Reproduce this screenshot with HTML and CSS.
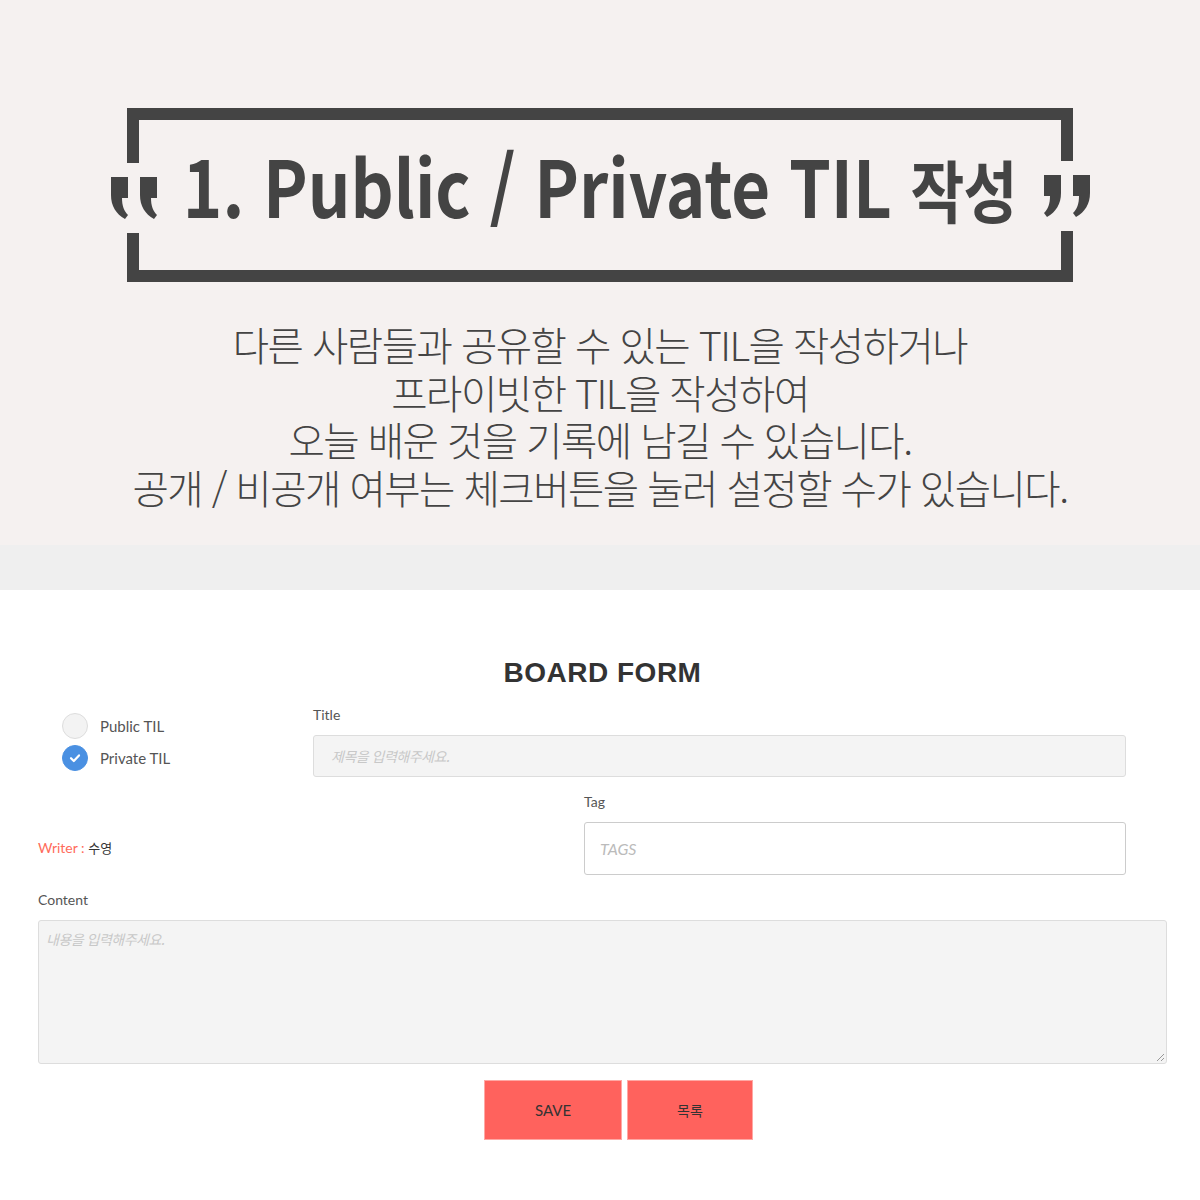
FILE: index.html
```html
<!DOCTYPE html>
<html lang="ko">
<head>
<meta charset="utf-8">
<title>Public / Private TIL</title>
<link rel="stylesheet" href="styles.css">
</head>
<body>
<section class="hero">
  <div class="frame">
    <span class="quote quote-left">
      <svg width="47" height="42" viewBox="0 0 47 42"><path d="M0 0H17V21H11C11 29 13 34 17 38L14 42C5 37 0 29 0 18Z" fill="#444"/><path d="M0 0H17V21H11C11 29 13 34 17 38L14 42C5 37 0 29 0 18Z" fill="#444" transform="translate(29 0)"/></svg>
    </span>
    <h1 class="title">1. Public / Private TIL <span class="title-ko">작성</span></h1>
    <span class="quote quote-right">
      <svg width="47" height="42" viewBox="0 0 47 42"><g transform="translate(47 0) scale(-1 1)"><path d="M0 0H17V21H11C11 29 13 34 17 38L14 42C5 37 0 29 0 18Z" fill="#444"/><path d="M0 0H17V21H11C11 29 13 34 17 38L14 42C5 37 0 29 0 18Z" fill="#444" transform="translate(29 0)"/></g></svg>
    </span>
  </div>
  <p class="desc">다른 사람들과 공유할 수 있는 TIL을 작성하거나<br>프라이빗한 TIL을 작성하여<br>오늘 배운 것을 기록에 남길 수 있습니다.<br>공개 / 비공개 여부는 체크버튼을 눌러 설정할 수가 있습니다.</p>
</section>
<div class="band"></div>
<section class="form">
  <h2 class="form-title">BOARD FORM</h2>
  <div class="row row-top">
    <div class="radios">
      <label class="radio"><span class="dot"></span>Public TIL</label>
      <label class="radio"><span class="dot dot-on"><svg width="14" height="14" viewBox="0 0 14 14"><path d="M3 7.2L5.8 10L11 4.4" fill="none" stroke="#fff" stroke-width="2.2" stroke-linecap="round" stroke-linejoin="round"/></svg></span>Private TIL</label>
    </div>
    <div class="field field-title">
      <div class="label">Title</div>
      <div class="input input-gray">제목을 입력해주세요.</div>
    </div>
  </div>
  <div class="row row-mid">
    <div class="writer"><span class="writer-key">Writer : </span><span class="writer-val">수영</span></div>
    <div class="field field-tag">
      <div class="label">Tag</div>
      <div class="input input-white">TAGS</div>
    </div>
  </div>
  <div class="content">
    <div class="label">Content</div>
    <div class="textarea">내용을 입력해주세요.<svg class="grip" width="9" height="9" viewBox="0 0 9 9"><path d="M8 1L1 8M8 5L5 8" stroke="#999" stroke-width="1"/></svg></div>
  </div>
  <div class="buttons">
    <button class="btn btn-save">SAVE</button>
    <button class="btn btn-list">목록</button>
  </div>
</section>
</body>
</html>
```
FILE: styles.css
```css
* { box-sizing: border-box; }
body {
  margin: 0;
  background: #fff;
  font-family: "Noto Sans", "Noto Sans CJK KR", sans-serif;
}
.hero {
  background: #f5f1f0;
  height: 545px;
  padding-top: 108px;
}
.frame {
  position: relative;
  margin-left: 127px;
  width: 946px;
  height: 174px;
  border: 12px solid #444;
  display: flex;
  align-items: center;
  justify-content: center;
}
.quote {
  position: absolute;
  z-index: 1;
  width: 47px;
  height: 70px;
  background: #f5f1f0;
  display: flex;
  align-items: center;
  justify-content: center;
}
.quote-left { left: -28px; top: 43px; }
.quote-right { left: 904px; top: 41px; }
.title {
  flex: none;
  margin: 0 0 22px 0;
  white-space: nowrap;
  font-family: "Noto Sans CJK KR", sans-serif;
  font-weight: bold;
  font-size: 78px;
  line-height: 1;
  color: #444;
  transform: scaleX(0.86);
}
.title-ko {
  font-size: 68px;
  letter-spacing: -1px;
}
.desc {
  margin: 38px 0 0 0;
  text-align: center;
  font-family: "Noto Sans CJK KR", sans-serif;
  font-weight: 300;
  font-size: 39.5px;
  line-height: 47.5px;
  color: #444;
  letter-spacing: -1.5px;
}
.band {
  height: 45px;
  background: #efefef;
}
.form {
  padding: 65px 0 0 38px;
  width: 1167px;
}
.form-title {
  margin: 0;
  text-align: center;
  font-family: "Liberation Sans", Arial, sans-serif;
  font-weight: bold;
  font-size: 28px;
  line-height: 36px;
  color: #333;
  letter-spacing: 0.5px;
}
.row { display: flex; }
.row-top { margin-top: 15px; }
.radios {
  width: 275px;
  padding: 7px 0 0 24px;
  display: flex;
  flex-direction: column;
  gap: 6px;
}
.radio {
  display: flex;
  align-items: center;
  gap: 12px;
  font-family: "Lato", sans-serif;
  font-size: 15px;
  color: #555;
  height: 26px;
}
.dot {
  width: 26px;
  height: 26px;
  border-radius: 50%;
  background: #f3f3f3;
  border: 1px solid #ddd;
  display: flex;
  align-items: center;
  justify-content: center;
}
.dot-on {
  background: #4a90e2;
  border-color: #4a90e2;
}
.label {
  font-family: "Lato", sans-serif;
  font-size: 14px;
  color: #555;
  line-height: 18px;
}
.field-title { width: 813px; }
.field-title .label { margin-bottom: 11px; }
.input {
  border-radius: 3px;
  font-family: "Noto Sans CJK KR", sans-serif;
  font-style: italic;
  color: #c8c8c8;
  display: flex;
  align-items: center;
}
.input-gray {
  height: 42px;
  background: #f4f4f4;
  border: 1px solid #ddd;
  padding-left: 17px;
  font-size: 14px;
  letter-spacing: -0.5px;
}
.row-mid { margin-top: 16px; }
.writer {
  width: 546px;
  padding-top: 45px;
  font-family: "Lato", "Noto Sans CJK KR", sans-serif;
  font-size: 14px;
}
.writer-key { color: #ff6b5b; }
.writer-val { color: #333; font-size: 13px; }
.field-tag { width: 542px; }
.field-tag .label { margin-bottom: 11px; }
.input-white {
  height: 53px;
  background: #fff;
  border: 1px solid #ccc;
  padding-left: 15px;
  font-family: "Lato", sans-serif;
  font-size: 16px;
  color: #bbb;
}
.content { margin-top: 16px; }
.content .label { margin-bottom: 11px; }
.textarea {
  position: relative;
  height: 144px;
  background: #f4f4f4;
  border: 1px solid #ddd;
  border-radius: 3px;
  padding: 8px 7px;
  font-family: "Noto Sans CJK KR", sans-serif;
  font-style: italic;
  font-size: 14px;
  color: #c8c8c8;
  letter-spacing: -0.5px;
}
.grip { position: absolute; right: 1px; bottom: 1px; }
.buttons {
  display: flex;
  justify-content: center;
  gap: 5px;
  margin-top: 16px;
  padding-left: 32px;
}
.btn {
  height: 60px;
  border: 1px solid #ffa8a4;
  background: #ff625d;
  color: #333;
  font-family: "Lato", "Noto Sans CJK KR", sans-serif;
  font-size: 15px;
  cursor: pointer;
}
.btn-save { width: 138px; }
.btn-list { width: 126px; font-family: "Noto Sans CJK KR", sans-serif; font-size: 14px; }
```
